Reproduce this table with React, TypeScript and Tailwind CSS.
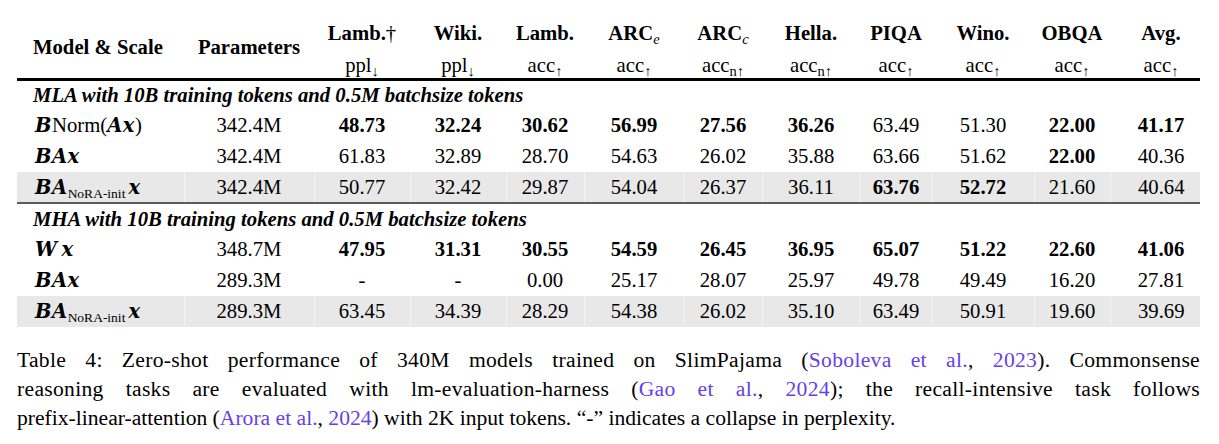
const mathFont = "font-['DejaVu_Serif','Liberation_Serif',serif]";

function M({ children }: { children: React.ReactNode }) {
  return <span className={`${mathFont} font-bold italic text-[19.5px] tracking-[0.5px]`}>{children}</span>;
}

function Sub({ children, italic }: { children: React.ReactNode; italic?: boolean }) {
  return (
    <sub className={`text-[14.5px] font-normal -bottom-[0.3em] ${italic ? 'italic' : ''}`}>
      {children}
    </sub>
  );
}

const cols = [
  'w-[167px]',
  'w-[130px]',
  'w-[96px]',
  'w-[96px]',
  'w-[78px]',
  'w-[100px]',
  'w-[78px]',
  'w-[98px]',
  'w-[72px]',
  'w-[102px]',
  'w-[76px]',
  'w-[90px]',
];

type Row = {
  model: React.ReactNode;
  params: string;
  vals: string[];
  bold: boolean[];
  gray?: boolean;
};

const BNorm = (
  <>
    <M>B</M>Norm(<M>Ax</M>)
  </>
);
const BAx = <M>BAx</M>;
const BANora = (
  <>
    <M>BA</M>
    <sub className="text-[13.5px] -bottom-[0.3em] pr-[3px]">NoRA-init</sub>
    <M>x</M>
  </>
);
const Wx = (
  <>
    <M>W</M>
    <span className="pl-[4px]">
      <M>x</M>
    </span>
  </>
);

const mla: Row[] = [
  {
    model: BNorm,
    params: '342.4M',
    vals: ['48.73', '32.24', '30.62', '56.99', '27.56', '36.26', '63.49', '51.30', '22.00', '41.17'],
    bold: [true, true, true, true, true, true, false, false, true, true],
  },
  {
    model: BAx,
    params: '342.4M',
    vals: ['61.83', '32.89', '28.70', '54.63', '26.02', '35.88', '63.66', '51.62', '22.00', '40.36'],
    bold: [false, false, false, false, false, false, false, false, true, false],
  },
  {
    model: BANora,
    params: '342.4M',
    vals: ['50.77', '32.42', '29.87', '54.04', '26.37', '36.11', '63.76', '52.72', '21.60', '40.64'],
    bold: [false, false, false, false, false, false, true, true, false, false],
    gray: true,
  },
];

const mha: Row[] = [
  {
    model: Wx,
    params: '348.7M',
    vals: ['47.95', '31.31', '30.55', '54.59', '26.45', '36.95', '65.07', '51.22', '22.60', '41.06'],
    bold: [true, true, true, true, true, true, true, true, true, true],
  },
  {
    model: BAx,
    params: '289.3M',
    vals: ['-', '-', '0.00', '25.17', '28.07', '25.97', '49.78', '49.49', '16.20', '27.81'],
    bold: [false, false, false, false, false, false, false, false, false, false],
  },
  {
    model: BANora,
    params: '289.3M',
    vals: ['63.45', '34.39', '28.29', '54.38', '26.02', '35.10', '63.49', '50.91', '19.60', '39.69'],
    bold: [false, false, false, false, false, false, false, false, false, false],
    gray: true,
  },
];

function DataRow({ row, last }: { row: Row; last?: boolean }) {
  const sep = row.gray ? 'border-l border-[#f3f3f3]' : '';
  return (
    <tr className={`${row.gray ? 'bg-[#e8e8e8]' : ''} ${last ? 'border-b-2 border-[#5c5c5c]' : ''}`}>
      <td className="h-[31px] pl-[18px] text-left whitespace-nowrap">{row.model}</td>
      <td className={`h-[31px] text-center ${sep}`}>{row.params}</td>
      {row.vals.map((v, i) => (
        <td
          key={i}
          className={`h-[31px] text-center ${sep} ${row.bold[i] ? 'font-bold' : ''} ${i === 9 ? 'pl-[12px]' : ''}`}
        >
          {v}
        </td>
      ))}
    </tr>
  );
}

function Section({ title }: { title: string }) {
  return (
    <tr>
      <td colSpan={12} className="h-[31px] pl-[16px] text-left font-bold italic whitespace-nowrap">
        {title}
      </td>
    </tr>
  );
}

const heads: { top: React.ReactNode; bottom: React.ReactNode }[] = [
  { top: <>Lamb.<span className="font-normal">†</span></>, bottom: <>ppl<Sub>↓</Sub></> },
  { top: 'Wiki.', bottom: <>ppl<Sub>↓</Sub></> },
  { top: 'Lamb.', bottom: <>acc<Sub>↑</Sub></> },
  { top: <>ARC<Sub italic>e</Sub></>, bottom: <>acc<Sub>↑</Sub></> },
  { top: <>ARC<Sub italic>c</Sub></>, bottom: <>acc<Sub>n↑</Sub></> },
  { top: 'Hella.', bottom: <>acc<Sub>n↑</Sub></> },
  { top: 'PIQA', bottom: <>acc<Sub>↑</Sub></> },
  { top: 'Wino.', bottom: <>acc<Sub>↑</Sub></> },
  { top: 'OBQA', bottom: <>acc<Sub>↑</Sub></> },
  { top: 'Avg.', bottom: <>acc<Sub>↑</Sub></> },
];

function Cite({ children }: { children: React.ReactNode }) {
  return <span className="text-[#6541ea]">{children}</span>;
}

export default function App() {
  return (
    <div className="w-[1219px] h-[444px] bg-white text-black px-[17px] pt-[17px] overflow-hidden font-['Liberation_Serif','Times_New_Roman',serif]">
      <table className="w-[1183px] table-fixed border-collapse text-[20.7px] leading-none">
        <colgroup>
          {cols.map((w, i) => (
            <col key={i} className={w} />
          ))}
        </colgroup>
        <thead>
          <tr>
            <th rowSpan={2} className="pl-[16px] text-left font-bold align-middle whitespace-nowrap">
              Model &amp; Scale
            </th>
            <th rowSpan={2} className="text-center font-bold align-middle">
              Parameters
            </th>
            {heads.map((h, i) => (
              <th key={i} className={`h-[32px] text-center font-bold align-middle ${i === 9 ? 'pl-[12px]' : ''}`}>
                {h.top}
              </th>
            ))}
          </tr>
          <tr className="border-b-[3px] border-black">
            {heads.map((h, i) => (
              <th
                key={i}
                className={`h-[30px] pt-[4px] text-center font-normal align-middle ${i === 9 ? 'pl-[12px]' : ''}`}
              >
                {h.bottom}
              </th>
            ))}
          </tr>
        </thead>
        <tbody>
          <Section title="MLA with 10B training tokens and 0.5M batchsize tokens" />
          {mla.map((r, i) => (
            <DataRow key={i} row={r} last={i === mla.length - 1} />
          ))}
          <Section title="MHA with 10B training tokens and 0.5M batchsize tokens" />
          {mha.map((r, i) => (
            <DataRow key={i} row={r} />
          ))}
        </tbody>
      </table>

      <div className="mt-[19px] w-[1183px] text-[21.6px] leading-[29px]">
        <p className="text-justify [text-align-last:justify] whitespace-nowrap tracking-[0.3px]">
          Table 4: Zero-shot performance of 340M models trained on SlimPajama (<Cite>Soboleva et al.</Cite>,{' '}
          <Cite>2023</Cite>). Commonsense
        </p>
        <p className="text-justify [text-align-last:justify] whitespace-nowrap tracking-[0.3px]">
          reasoning tasks are evaluated with lm-evaluation-harness (<Cite>Gao et al.</Cite>, <Cite>2024</Cite>); the
          recall-intensive task follows
        </p>
        <p className="whitespace-nowrap">
          prefix-linear-attention (<Cite>Arora et al.</Cite>, <Cite>2024</Cite>) with 2K input tokens. “-” indicates a
          collapse in perplexity.
        </p>
      </div>
    </div>
  );
}
